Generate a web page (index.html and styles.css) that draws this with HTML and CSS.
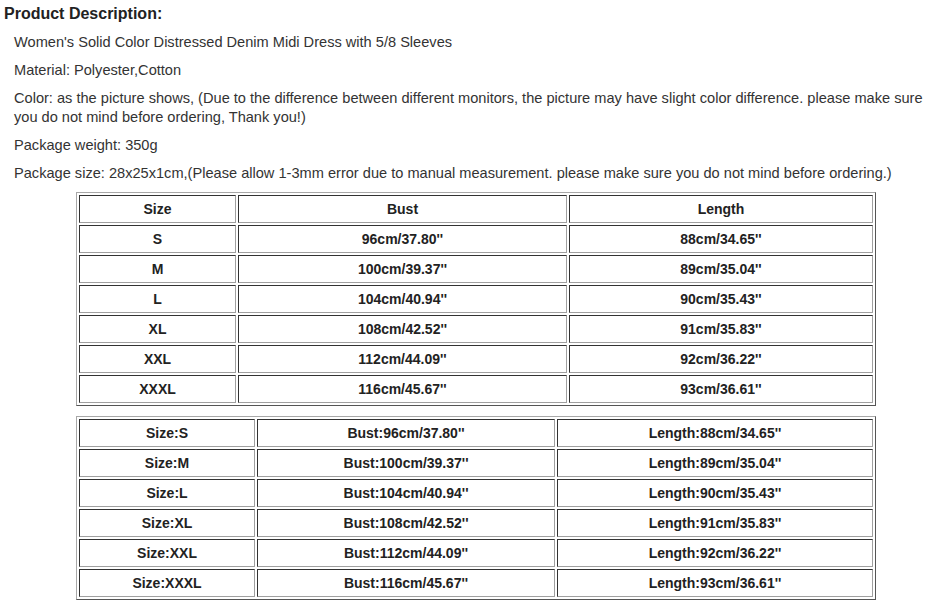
FILE: index.html
```html
<!DOCTYPE html>
<html>
<head>
<meta charset="utf-8">
<link rel="stylesheet" href="styles.css">
</head>
<body>
<h2 class="title">Product Description:</h2>
<div class="content">
  <p>Women's Solid Color Distressed Denim Midi Dress with 5/8 Sleeves</p>
  <p>Material: Polyester,Cotton</p>
  <p>Color: as the picture shows, (Due to the difference between different monitors, the picture may have slight color difference. please make sure you do not mind before ordering, Thank you!)</p>
  <p>Package weight: 350g</p>
  <p>Package size: 28x25x1cm,(Please allow 1-3mm error due to manual measurement. please make sure you do not mind before ordering.)</p>
  <table class="size-table t1">
    <colgroup><col class="c1"><col class="c2"><col class="c3"></colgroup>
    <tr><td>Size</td><td>Bust</td><td>Length</td></tr>
    <tr><td>S</td><td>96cm/37.80''</td><td>88cm/34.65''</td></tr>
    <tr><td>M</td><td>100cm/39.37''</td><td>89cm/35.04''</td></tr>
    <tr><td>L</td><td>104cm/40.94''</td><td>90cm/35.43''</td></tr>
    <tr><td>XL</td><td>108cm/42.52''</td><td>91cm/35.83''</td></tr>
    <tr><td>XXL</td><td>112cm/44.09''</td><td>92cm/36.22''</td></tr>
    <tr><td>XXXL</td><td>116cm/45.67''</td><td>93cm/36.61''</td></tr>
  </table>
  <table class="size-table t2">
    <colgroup><col class="c1"><col class="c2"><col class="c3"></colgroup>
    <tr><td>Size:S</td><td>Bust:96cm/37.80''</td><td>Length:88cm/34.65''</td></tr>
    <tr><td>Size:M</td><td>Bust:100cm/39.37''</td><td>Length:89cm/35.04''</td></tr>
    <tr><td>Size:L</td><td>Bust:104cm/40.94''</td><td>Length:90cm/35.43''</td></tr>
    <tr><td>Size:XL</td><td>Bust:108cm/42.52''</td><td>Length:91cm/35.83''</td></tr>
    <tr><td>Size:XXL</td><td>Bust:112cm/44.09''</td><td>Length:92cm/36.22''</td></tr>
    <tr><td>Size:XXXL</td><td>Bust:116cm/45.67''</td><td>Length:93cm/36.61''</td></tr>
  </table>
</div>
</body>
</html>
```

FILE: styles.css
```css
html, body {
  margin: 0;
  padding: 0;
  background: #fff;
}
body {
  font-family: "Liberation Sans", Arial, sans-serif;
  color: #333;
}
.title {
  margin: 0;
  padding: 4px 0 0 4px;
  font-size: 16px;
  line-height: 20px;
  font-weight: bold;
  color: #222;
}
.content {
  width: 924px;
  padding-left: 14px;
  padding-top: 9px;
}
.content p {
  margin: 0 0 9px 0;
  font-size: 14.6px;
  line-height: 19px;
}
.size-table {
  width: 800px;
  margin: 0 auto;
  table-layout: fixed;
  border-collapse: separate;
  border-spacing: 2px;
  border: 1px solid;
  border-color: #a8a8a8 #555 #555 #a8a8a8;
}
.size-table td {
  border: 1px solid;
  border-color: #333 #a0a0a0 #a0a0a0 #333;
  padding: 5px 1px;
  font-size: 14px;
  line-height: 16px;
  font-weight: bold;
  color: #222;
  text-align: center;
}
.t1 {
  margin-top: 9px;
}
.t1 .c1 { width: 157px; }
.t1 .c2 { width: 329px; }
.t1 .c3 { width: 304px; }
.t2 {
  margin-top: 10px;
}
.t2 .c1 { width: 176px; }
.t2 .c2 { width: 298px; }
.t2 .c3 { width: 316px; }
```
